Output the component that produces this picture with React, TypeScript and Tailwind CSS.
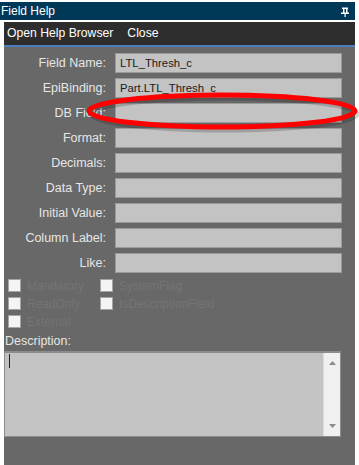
import React from "react";

const fields: { label: string; value: string }[] = [
  { label: "Field Name:", value: "LTL_Thresh_c" },
  { label: "EpiBinding:", value: "Part.LTL_Thresh_c" },
  { label: "DB Field:", value: "" },
  { label: "Format:", value: "" },
  { label: "Decimals:", value: "" },
  { label: "Data Type:", value: "" },
  { label: "Initial Value:", value: "" },
  { label: "Column Label:", value: "" },
  { label: "Like:", value: "" },
];

function Check({ label }: { label: string }) {
  return (
    <div className="flex items-center gap-[6px] h-[13px]">
      <div className="w-[13px] h-[13px] bg-[#f4f4f4] border border-[#a4a4a4] shrink-0" />
      <span className="text-[12px] text-[#747474] leading-none whitespace-nowrap">{label}</span>
    </div>
  );
}

export default function App() {
  return (
    <div
      className="relative w-[359px] h-[465px] bg-white overflow-hidden flex flex-col"
      style={{ fontFamily: '"Liberation Sans", Arial, sans-serif' }}
    >
      {/* Title bar */}
      <div className="mt-[2px] w-[355px] h-[18px] bg-[#003858] flex items-center justify-between pl-[1px] pr-[6px]">
        <span className="text-white text-[12px] leading-none">Field Help</span>
        <svg width="8" height="10" viewBox="0 0 8 10" className="mt-[1px]">
          <rect x="1" y="0.5" width="6" height="1.5" fill="#fff" />
          <rect x="2" y="1" width="1.5" height="5" fill="#fff" />
          <rect x="5" y="1" width="1.5" height="5" fill="#fff" />
          <rect x="0" y="5.5" width="8" height="1.5" fill="#fff" />
          <rect x="3.5" y="6" width="1.2" height="4" fill="#fff" />
        </svg>
      </div>

      {/* Menu bar */}
      <div className="mt-[2px] ml-[4px] w-[351px] h-[25px] bg-[#2d2d2d] border-b-2 border-[#4d7fbf] flex items-center gap-[14px] pl-[3px] pb-[1px]">
        <span className="text-white text-[12.2px]">Open Help Browser</span>
        <span className="text-white text-[12.2px]">Close</span>
      </div>

      {/* Body */}
      <div className="ml-[4px] w-[351px] flex-1 bg-[#686868] flex flex-col pt-[6px]">
        <div className="flex flex-col gap-[5px]">
          {fields.map((f) => (
            <div key={f.label} className="flex items-center h-[20px]">
              <span className="w-[102px] text-right text-[12.5px] text-[#e6e6e6]">{f.label}</span>
              <div className="ml-[9px] w-[227px] h-[20px] bg-[#c3c3c3] border border-[#9a9a9a] flex items-center pl-[4px] text-[11.3px] text-[#1a1a1a]">
                {f.value}
              </div>
            </div>
          ))}
        </div>

        <div className="mt-[6px] pl-[4px] flex">
          <div className="w-[92px] flex flex-col gap-[5px]">
            <Check label="Mandatory" />
            <Check label="ReadOnly" />
            <Check label="External" />
          </div>
          <div className="flex flex-col gap-[5px]">
            <Check label="SystemFlag" />
            <Check label="IsDescriptionField" />
          </div>
        </div>

        <div className="mt-[6px] pl-[1px] text-[12.5px] text-[#e6e6e6] leading-[15px]">Description:</div>

        <div className="mt-[2px] w-[337px] h-[86px] bg-[#c3c3c3] border border-[#8c8c8c] border-t-2 flex">
          <div className="flex-1 pl-[4px] pt-[1px]">
            <div className="w-[1px] h-[14px] bg-[#222]" />
          </div>
          <div className="w-[17px] bg-[#f0f0f0] border-l border-[#dcdcdc] flex flex-col items-center justify-between py-[8px]">
            <svg width="7" height="4" viewBox="0 0 7 4">
              <path d="M0 4 L3.5 0 L7 4 Z" fill="#8a8a8a" />
            </svg>
            <svg width="7" height="4" viewBox="0 0 7 4">
              <path d="M0 0 L7 0 L3.5 4 Z" fill="#8a8a8a" />
            </svg>
          </div>
        </div>
      </div>

      {/* Red annotation ellipse */}
      <svg className="absolute left-0 top-0 pointer-events-none" width="359" height="465">
        <ellipse cx="224" cy="114" rx="133" ry="16" fill="none" stroke="#000" strokeOpacity="0.18" strokeWidth="5" />
        <ellipse cx="222" cy="111" rx="133" ry="16" fill="none" stroke="#ff0000" strokeWidth="5" />
      </svg>
    </div>
  );
}
